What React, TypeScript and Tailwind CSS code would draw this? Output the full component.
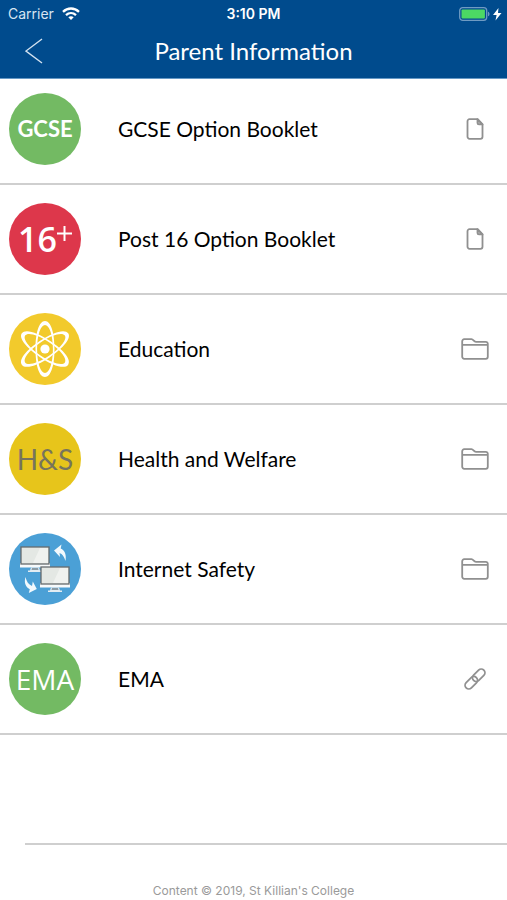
import type { ReactNode } from 'react';

type Kind = 'file' | 'folder' | 'link';

function Badge({ className, children }: { className: string; children: ReactNode }) {
  return (
    <span
      className={`flex size-18 shrink-0 items-center justify-center overflow-hidden rounded-full leading-none whitespace-nowrap ${className}`}
    >
      {children}
    </span>
  );
}

function Atom() {
  return (
    <svg viewBox="0 0 72 72" className="size-18" aria-hidden="true">
      {[0, 56, 124].map((angle) => (
        <path
          key={angle}
          fill="#fff"
          fillRule="evenodd"
          transform={`rotate(${angle} 36 36)`}
          d="M36 8c6 0 9.500 12 9.500 28S42 64 36 64s-9.500-12-9.500-28S30 8 36 8ZM36 12c-4.200 0-7.900 9.500-7.900 24S31.800 60 36 60s7.900-9.500 7.900-24S40.200 12 36 12Z"
        />
      ))}
      <circle cx="36" cy="36" r="4.600" fill="#fff" />
    </svg>
  );
}

function Monitor({ x, y }: { x: number; y: number }) {
  return (
    <g transform={`translate(${x} ${y})`}>
      <path d="M0 17h30v4.500H0z" fill="#f7fafb" />
      <path d="M11 21.500h8l1 3h2V26H8v-1.500h2z" fill="#e3ecf2" />
      <path d="M12 22h6l.5 2h-7z" fill="#8b9ba5" />
      <rect x="1" y="1" width="28" height="17" fill="#e4e8e4" stroke="#666c6e" strokeWidth="1.300" />
      <path d="M20 2h8v15H13z" fill="#f0f2ef" />
    </g>
  );
}

function Computers() {
  return (
    <svg viewBox="0 0 72 72" className="size-18" aria-hidden="true">
      <Monitor x={11} y={13} />
      <Monitor x={31} y={33} />
      <path d="M45 17.500l7.500-6-.8 4c4 1.800 6 6 4.800 12.500-1.500-4.500-3-7-6-8l.5 4z" fill="#f2f9fd" />
      <path d="M16.500 44c1 4.500 3 7.500 6.500 9l.8-4.500 4 7.500-8 4 1-3.800C16.500 54 14.800 49.500 16.500 44z" fill="#f2f9fd" />
    </svg>
  );
}

function KindIcon({ kind }: { kind: Kind }) {
  return (
    <svg
      viewBox="0 0 30 30"
      className="size-[30px] shrink-0"
      fill="none"
      stroke="#909090"
      strokeWidth="1.800"
      strokeLinejoin="round"
      aria-hidden="true"
    >
      {kind === 'file' && (
        <>
          <path d="M9.500 5.200h8l5 5.200v12.400a2 2 0 0 1-2 2h-11a2 2 0 0 1-2-2V7.200a2 2 0 0 1 2-2Z" />
          <path d="M17.500 5.200v3.700a1.500 1.500 0 0 0 1.500 1.500h3.500Z" fill="#b5b5b5" />
        </>
      )}
      {kind === 'folder' && (
        <path d="M2.200 10.800V7.200a2 2 0 0 1 2-2h7.300c2 0 2 2.600 4.500 2.600h9.800a2 2 0 0 1 2 2v13a2 2 0 0 1-2 2H4.200a2 2 0 0 1-2-2v-12h25.600" />
      )}
      {kind === 'link' && (
        <g transform="rotate(-45 15 15)">
          <rect x="2.500" y="11.300" width="14.500" height="7.400" rx="3.700" />
          <rect x="13" y="11.300" width="14.500" height="7.400" rx="3.700" />
        </g>
      )}
    </svg>
  );
}

const items: { label: string; kind: Kind; badge: ReactNode }[] = [
  {
    label: 'GCSE Option Booklet',
    kind: 'file',
    badge: <Badge className="bg-[#73ba63] text-[22px] font-bold text-white">GCSE</Badge>,
  },
  {
    label: 'Post 16 Option Booklet',
    kind: 'file',
    badge: (
      <Badge className="bg-[#dd374b] font-['Open_Sans',sans-serif] text-[34px] font-semibold text-white">
        16
        <svg viewBox="0 0 15 15" className="mb-3 size-[15px]" stroke="#fff" strokeWidth="2" role="img" aria-label="plus">
          <path d="M7.500 0v15M0 7.500h15" />
        </svg>
      </Badge>
    ),
  },
  { label: 'Education', kind: 'folder', badge: <Badge className="bg-[#f2ca2c]"><Atom /></Badge> },
  {
    label: 'Health and Welfare',
    kind: 'folder',
    badge: <Badge className="bg-[#e7c51b] text-[28px] text-[#77745c]">H&amp;S</Badge>,
  },
  { label: 'Internet Safety', kind: 'folder', badge: <Badge className="bg-[#4ba0d6]"><Computers /></Badge> },
  {
    label: 'EMA',
    kind: 'link',
    badge: <Badge className="bg-[#73ba63] font-['Open_Sans',sans-serif] text-[28px] text-white">EMA</Badge>,
  },
];

function StatusBar() {
  return (
    <div className="grid h-[27px] grid-cols-3 items-center px-2 font-['Inter',sans-serif] text-[14px]">
      <div className="flex items-center gap-2 text-[#d7e5f2]">
        Carrier
        <svg viewBox="0 0 18 13" className="h-[13px] w-[18px]" fill="none" stroke="#fff" strokeWidth="2.300" aria-hidden="true">
          <path d="M1 4.800c4.600-4.400 11.400-4.400 16 0M4 8.200c2.900-2.700 7.100-2.700 10 0" />
          <path d="M6.300 10.200c1.600-1.300 3.800-1.300 5.400 0L9 13z" fill="#fff" stroke="none" />
        </svg>
      </div>
      <div className="text-center font-semibold">3:10 PM</div>
      <div className="flex justify-end">
        <svg viewBox="0 0 44 14" className="-mr-1 h-3.5 w-11" role="img" aria-label="Battery charging">
          <rect x="0.700" y="0.700" width="27" height="12.600" rx="3" fill="none" stroke="#6f9bc3" strokeWidth="1.300" />
          <rect x="2.500" y="2.500" width="23.400" height="9" rx="1" fill="#4cd964" />
          <path d="M29 4.700c2 .6 2 4 0 4.600z" fill="#6f9bc3" />
          <path d="M39.500 1 34 8h3.600l-1.100 5.500L42.500 6H39z" fill="#fff" />
        </svg>
      </div>
    </div>
  );
}

export default function App() {
  return (
    <div className="min-h-screen bg-white font-['Lato',sans-serif] text-black">
      <header className="relative z-10 h-[79px] border-b border-[#6699c6] bg-[#004b8d] text-white">
        <StatusBar />
        <div className="grid h-12 grid-cols-[68px_1fr_68px] items-center">
          <button type="button" aria-label="Back" className="flex h-full items-center justify-center">
            <svg viewBox="0 0 18 26" className="h-[26px] w-[18px]" fill="none" stroke="#d3e2f0" strokeWidth="1.400">
              <path d="M17 1 1 13l16 12" />
            </svg>
          </button>
          <h1 className="text-center text-[24px] leading-8">Parent Information</h1>
        </div>
      </header>

      <ul className="-mt-1">
        {items.map((item) => (
          <li key={item.label} className="border-b-2 border-[#cfcfcf]">
            <a href="#" className="flex h-27 items-center pr-[17px] pl-[9px]">
              {item.badge}
              <span className="ml-[37px] flex-1 text-[21px] leading-7">{item.label}</span>
              <KindIcon kind={item.kind} />
            </a>
          </li>
        ))}
        <li aria-hidden="true" className="ml-[25px] h-[110px] border-b-2 border-[#cfcfcf]" />
      </ul>

      <footer className="pt-[37px] text-center font-['Inter',sans-serif] text-[12px] leading-[18px] text-[#9a9a9a]">
        Content © 2019, St Killian's College
      </footer>
    </div>
  );
}
